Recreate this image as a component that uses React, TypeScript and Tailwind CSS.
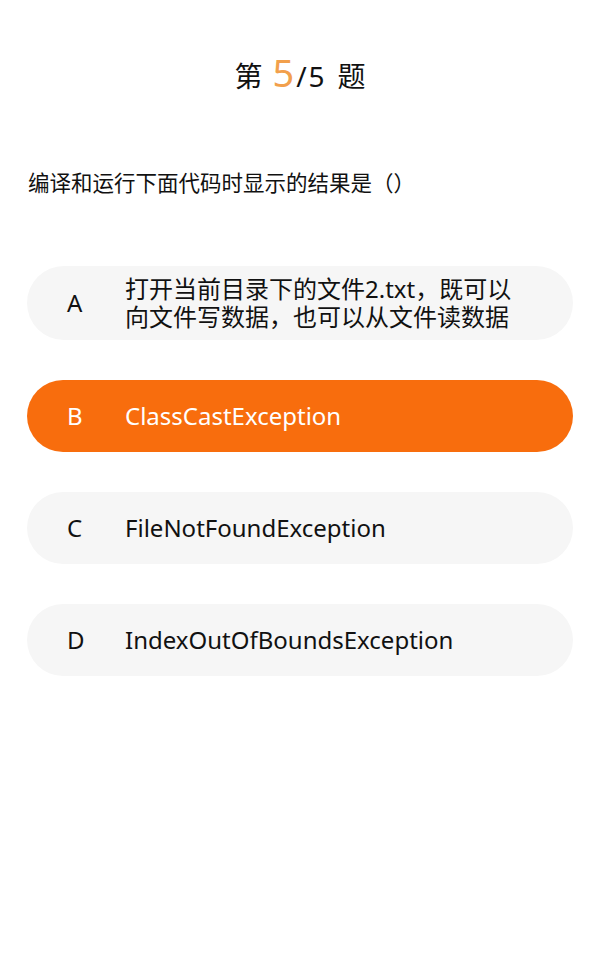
const options = [
  { key: "A", text: "打开当前目录下的文件2.txt，既可以向文件写数据，也可以从文件读数据" },
  { key: "B", text: "ClassCastException" },
  { key: "C", text: "FileNotFoundException" },
  { key: "D", text: "IndexOutOfBoundsException" },
]

const selected = "B"

export default function App() {
  return (
    <div
      className="min-h-screen w-full bg-white text-[#111111]"
      style={{ fontFamily: '"Noto Sans", "Noto Sans CJK SC", sans-serif' }}
    >
      {/* 标题 */}
      <div className="flex h-[144px] items-center justify-center">
        <div className="flex items-baseline text-[28px] leading-none">
          <span>第</span>
          <span className="ml-[10px] text-[38px] text-[#f2a04c]">5</span>
          <span className="ml-[2px] tracking-[2px]">/5</span>
          <span className="ml-[11px]">题</span>
        </div>
      </div>

      {/* 题干 */}
      <p className="mt-[24px] px-[28px] text-[21.5px] leading-[30px]">编译和运行下面代码时显示的结果是（）</p>

      {/* 选项 */}
      <div className="mt-[68px] flex flex-col gap-[40px] px-[27px]">
        {options.map((o) => {
          const active = o.key === selected
          return (
            <div
              key={o.key}
              className={
                active
                  ? "flex min-h-[72px] items-center rounded-full bg-[#f86d0d] py-[9px] pl-[40px] pr-[40px] text-white"
                  : "flex min-h-[72px] items-center rounded-full bg-[#f6f6f6] py-[9px] pl-[40px] pr-[40px] text-[#111111]"
              }
            >
              <span className="w-[58px] shrink-0 text-[24px] leading-[28px]">{o.key}</span>
              <span className="max-w-[400px] text-[24px] leading-[28px]">{o.text}</span>
            </div>
          )
        })}
      </div>
    </div>
  )
}
